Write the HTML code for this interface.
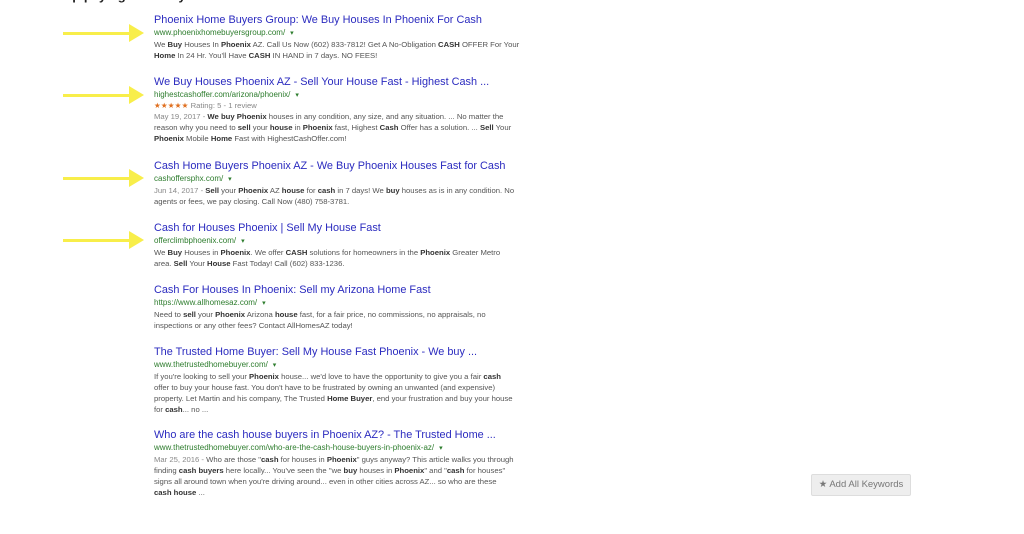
<!DOCTYPE html>
<html><head><meta charset="utf-8"><style>
body{margin:0;width:1024px;height:534px;background:#fff;position:relative;overflow:hidden;font-family:"Liberation Sans",Arial,sans-serif}
.r{position:absolute;left:154px;width:420px}
.t{font-size:10.9px;color:#2b2bbf;line-height:14px;white-space:nowrap}
.u{font-size:8px;color:#2e7d2e;line-height:11px;white-space:nowrap}
.u:after{content:" \25BE";color:#2e7d2e;font-size:7px;margin-left:3px}
.s{font-size:7.7px;color:#555;line-height:11px;white-space:nowrap}
.s b{color:#333}
.d{color:#888}
.st{color:#e07020;letter-spacing:0}
.a{position:absolute;left:63px;width:70px;height:3px;background:#f8ee4a}
.a:after{content:"";position:absolute;left:66px;top:-8px;border-left:15px solid #f8ee4a;border-top:9.5px solid transparent;border-bottom:9.5px solid transparent}
.btn{position:absolute;left:811px;top:474px;width:98px;height:20px;background:#eee;border:1px solid #ddd;border-radius:2px;font-size:9.5px;color:#777;line-height:20px;text-align:center}
</style></head><body>
<div style="position:absolute;left:60px;top:-12px;font-size:13px;color:#222;font-weight:bold">top paying cash buyers</div>
<div class="a" style="top:32px"></div>
<div class="a" style="top:94px"></div>
<div class="a" style="top:177px"></div>
<div class="a" style="top:239px"></div>

<div class="r" style="top:13px"><div class="t">Phoenix Home Buyers Group: We Buy Houses In Phoenix For Cash</div><div class="u">www.phoenixhomebuyersgroup.com/</div><div class="s">We <b>Buy</b> Houses In <b>Phoenix</b> AZ. Call Us Now (602) 833-7812! Get A No-Obligation <b>CASH</b> OFFER For Your<br><b>Home</b> In 24 Hr. You'll Have <b>CASH</b> IN HAND in 7 days. NO FEES!</div></div>

<div class="r" style="top:75px"><div class="t">We Buy Houses Phoenix AZ - Sell Your House Fast - Highest Cash ...</div><div class="u">highestcashoffer.com/arizona/phoenix/</div><div class="s" style="line-height:10px"><span class="st">★★★★★</span> <span class="d">Rating: 5 - 1 review</span></div><div class="s"><span class="d">May 19, 2017 -</span> <b>We buy Phoenix</b> houses in any condition, any size, and any situation. ... No matter the<br>reason why you need to <b>sell</b> your <b>house</b> in <b>Phoenix</b> fast, Highest <b>Cash</b> Offer has a solution. ... <b>Sell</b> Your<br><b>Phoenix</b> Mobile <b>Home</b> Fast with HighestCashOffer.com!</div></div>

<div class="r" style="top:159px"><div class="t">Cash Home Buyers Phoenix AZ - We Buy Phoenix Houses Fast for Cash</div><div class="u">cashoffersphx.com/</div><div class="s"><span class="d">Jun 14, 2017 -</span> <b>Sell</b> your <b>Phoenix</b> AZ <b>house</b> for <b>cash</b> in 7 days! We <b>buy</b> houses as is in any condition. No<br>agents or fees, we pay closing. Call Now (480) 758-3781.</div></div>

<div class="r" style="top:221px"><div class="t">Cash for Houses Phoenix | Sell My House Fast</div><div class="u">offerclimbphoenix.com/</div><div class="s">We <b>Buy</b> Houses in <b>Phoenix</b>. We offer <b>CASH</b> solutions for homeowners in the <b>Phoenix</b> Greater Metro<br>area. <b>Sell</b> Your <b>House</b> Fast Today! Call (602) 833-1236.</div></div>

<div class="r" style="top:283px"><div class="t">Cash For Houses In Phoenix: Sell my Arizona Home Fast</div><div class="u">https://www.allhomesaz.com/</div><div class="s">Need to <b>sell</b> your <b>Phoenix</b> Arizona <b>house</b> fast, for a fair price, no commissions, no appraisals, no<br>inspections or any other fees? Contact AllHomesAZ today!</div></div>

<div class="r" style="top:345px"><div class="t">The Trusted Home Buyer: Sell My House Fast Phoenix - We buy ...</div><div class="u">www.thetrustedhomebuyer.com/</div><div class="s">If you're looking to sell your <b>Phoenix</b> house... we'd love to have the opportunity to give you a fair <b>cash</b><br>offer to buy your house fast. You don't have to be frustrated by owning an unwanted (and expensive)<br>property. Let Martin and his company, The Trusted <b>Home Buyer</b>, end your frustration and buy your house<br>for <b>cash</b>... no ...</div></div>

<div class="r" style="top:428px"><div class="t">Who are the cash house buyers in Phoenix AZ? - The Trusted Home ...</div><div class="u">www.thetrustedhomebuyer.com/who-are-the-cash-house-buyers-in-phoenix-az/</div><div class="s"><span class="d">Mar 25, 2016 -</span> Who are those "<b>cash</b> for houses in <b>Phoenix</b>" guys anyway? This article walks you through<br>finding <b>cash buyers</b> here locally... You've seen the "we <b>buy</b> houses in <b>Phoenix</b>" and "<b>cash</b> for houses"<br>signs all around town when you're driving around... even in other cities across AZ... so who are these<br><b>cash house</b> ...</div></div>

<div class="btn">★ Add All Keywords</div>
</body></html>
